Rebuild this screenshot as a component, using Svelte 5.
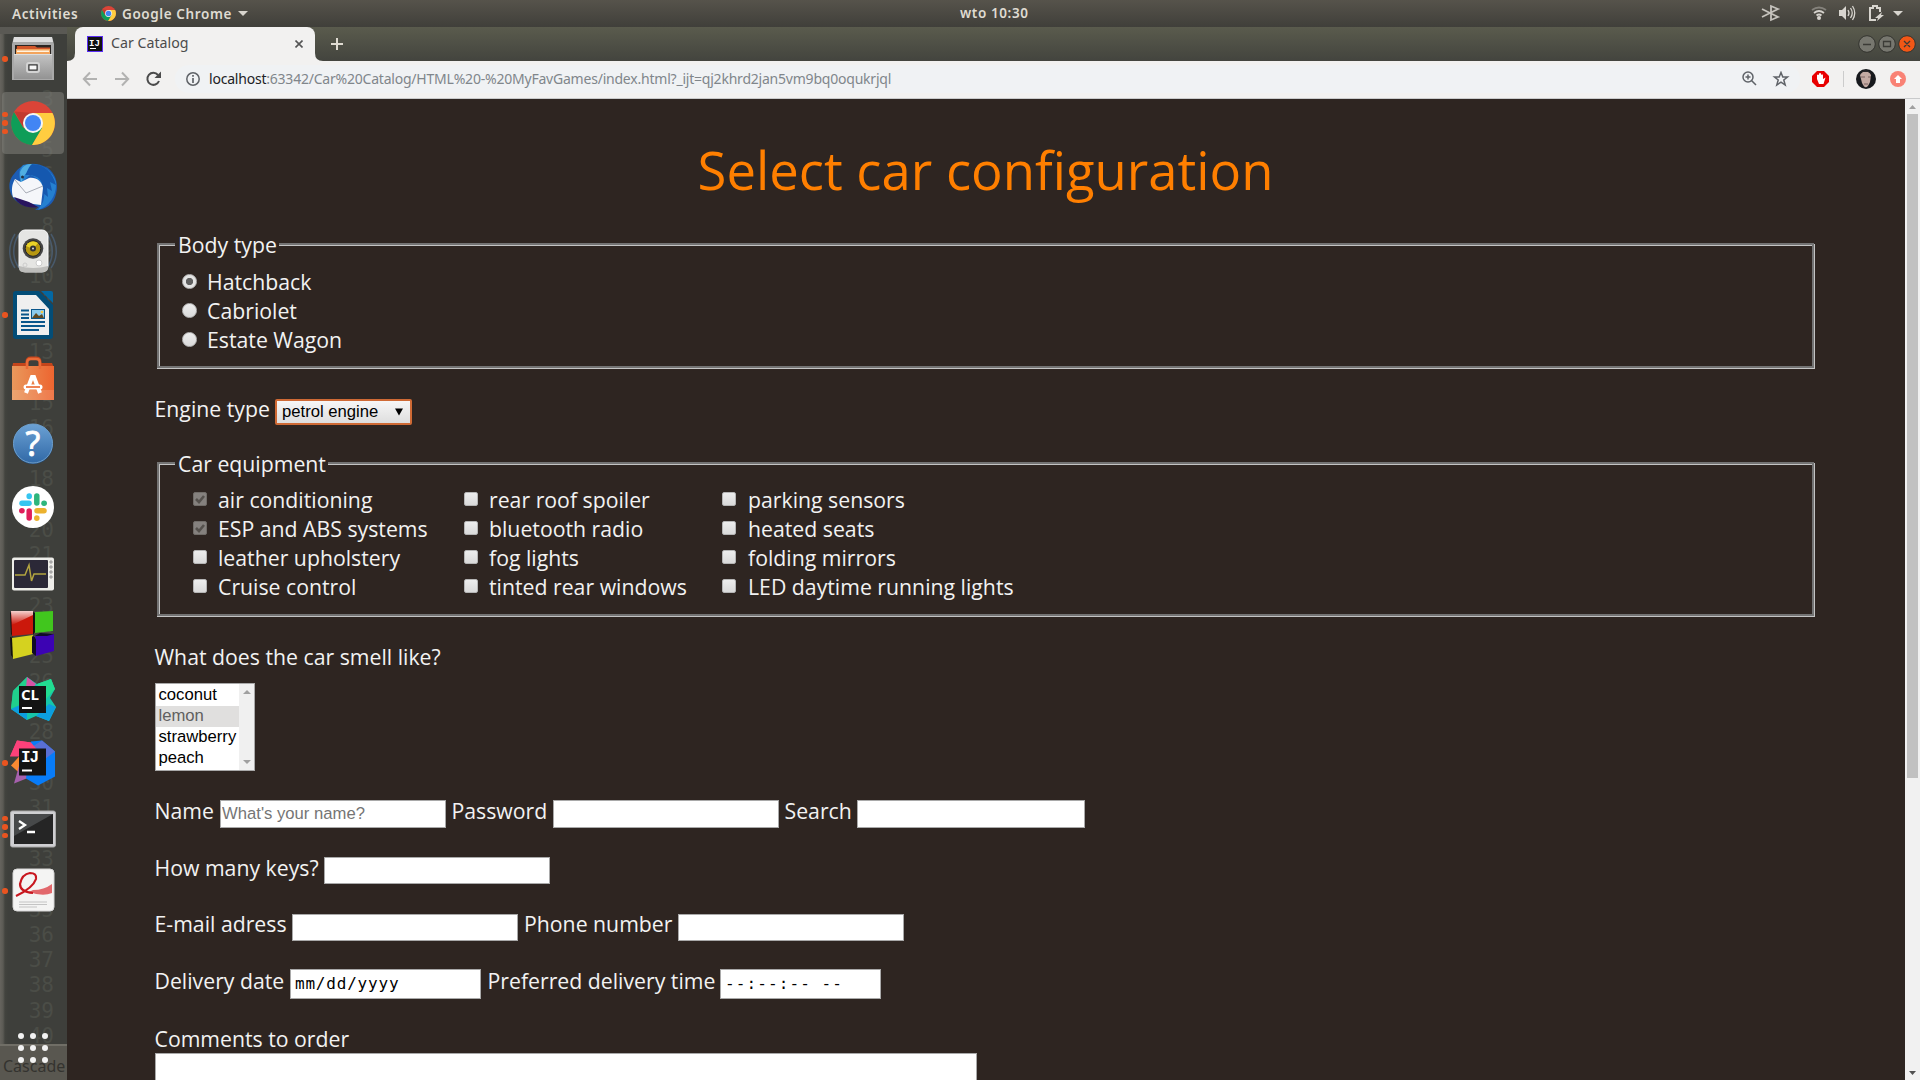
<script>
  // Line numbers of the editor that shows faintly through the dock.
  const covered = [4, 14, 17, 19, 27, 29];
  const lineNumbers = Array.from({ length: 38 }, (_, i) => (covered.includes(i + 3) ? '' : i + 3));
  const dock = [
    { id: 'files', dots: 1 },
    { id: 'chrome', dots: 3 },
    { id: 'mail', dots: 0 },
    { id: 'music', dots: 0 },
    { id: 'writer', dots: 1 },
    { id: 'software', dots: 0 },
    { id: 'help', dots: 0 },
    { id: 'slack', dots: 0 },
    { id: 'monitor', dots: 0 },
    { id: 'blocks', dots: 0 },
    { id: 'clion', dots: 0 },
    { id: 'idea', dots: 1 },
    { id: 'terminal', dots: 3 },
    { id: 'reader', dots: 1 }
  ];
  // Optical vertical adjustment of single icons inside their 48px box.
  const shift = { idea: 1.5, terminal: -1, reader: 1, help: -0.5 };
  const bodies = ['Hatchback', 'Cabriolet', 'Estate Wagon'];
  const equipment = [
    ['air conditioning', 'ESP and ABS systems', 'leather upholstery', 'Cruise control'],
    ['rear roof spoiler', 'bluetooth radio', 'fog lights', 'tinted rear windows'],
    ['parking sensors', 'heated seats', 'folding mirrors', 'LED daytime running lights']
  ];
  const smells = ['coconut', 'lemon', 'strawberry', 'peach'];
</script>

{#snippet chromeLogo(size)}
  <svg width={size} height={size} viewBox="0 0 44 44">
    <circle cx="22" cy="22" r="22" fill="#db4437" />
    <path d="M3 11 A22 22 0 0 0 21 44 L31.5 27 L22 22 L12.5 27Z" fill="#0f9d58" />
    <path d="M22 12 H41.5 A22 22 0 0 1 21 44 L31 27Z" fill="#ffcd40" />
    <path d="M3.5 10.500L13 27 L12 22 22 12Z" fill="#b5362c" opacity=".65" />
    <circle cx="22" cy="22" r="10" fill="#f5f5f5" />
    <circle cx="22" cy="22" r="8" fill="#4285f4" />
  </svg>
{/snippet}

{#snippet dockIcon(id)}
  {#if id === 'chrome'}
    {@render chromeLogo(44)}
  {:else}
    <svg width="48" height="48" viewBox="0 {shift[id] ?? 0} 48 48">
      {#if id === 'files'}
        <path d="M5 2H43L45 9V45H3V9Z" fill="#a9a9a9" />
        <path d="M5 2H43L44 7H4Z" fill="#dedede" />
        <path d="M6 10H42V20H6Z" fill="#2b2522" />
        <path d="M8 11H26L28 12.500H41V20H7Z" fill="#d2572a" />
        <path d="M7 14H41V20H7Z" fill="#f3a45c" />
        <path d="M8 15.500H40V17H8Z" fill="#fff3df" />
        <path d="M5 19H43V44H5Z" fill="url(#steel)" />
        <path d="M5 19.500H43" stroke="#ddd" />
        <rect x="18" y="28" width="12" height="9" rx="2" fill="#8b8b8b" stroke="#d3d3d3" stroke-width="2" />
        <rect x="20" y="30" width="8" height="5" fill="#f7f7f7" stroke="#333" />
      {:else if id === 'mail'}
        <path d="M5 11C12 0 25-2 37 4C46 9 50 20 47 31C45 41 37 47 26 47L30 44C15 46 3 38 1 28C-1 21 2 14 5 11Z" fill="#1c5cb4" />
        <path d="M14 2C28-2 43 5 47 19C48 32 41 43 29 47L34 39C38 26 33 16 21 12L12 20C9 11 10 6 14 2Z" fill="#2580d0" />
        <path d="M22 1C36 1 44 10 47 22L41 19L43 28L38 25L39 34L34 30C35 17 29 11 16 12Z" fill="#1558af" />
        <path d="M11 9C14 2 18 1 23 1C18 5 19 9 15 13L12 20Z" fill="#50aee1" />
        <circle cx="13.500" cy="14" r="1.500" fill="#263142" />
        <path d="M6 16L12 19 20 15C27 14 33 18 34 25L32 42C22 41 11 38 4 34C2 27 3 21 6 16Z" fill="#f5f6fa" />
        <path d="M6 17L17 30L34 23" fill="none" stroke="#a9adb7" />
        <path d="M5 34L20 39L29 44C19 46 9 42 5 34Z" fill="#29145e" />
      {:else if id === 'music'}
        <path d="M6 7C-1 18-1 31 6 41M10 7C3 18 3 31 10 41M42 7C49 18 49 31 42 41M38 7C45 18 45 31 38 41" fill="none" stroke="#4d6580" stroke-opacity=".7" stroke-width="1.500" />
        <rect x="10" y="3" width="29" height="42" rx="6" fill="#e5e5e3" stroke="#fafafa" />
        <path d="M10 39Q24 43 39 39V42Q38 45 34 45H14Q10 45 10 41Z" fill="#bdbdbb" />
        <circle cx="24" cy="21.500" r="10.300" fill="#454545" />
        <circle cx="24" cy="21.500" r="7.800" fill="#b69711" stroke="#262626" />
        <path d="M17 19A8 8 0 0 1 29 16L24 22Z" fill="#ead328" />
        <circle cx="24" cy="21.500" r="3" fill="#333" />
        <circle cx="24" cy="21.500" r="1" fill="#ddd" />
        <circle cx="30" cy="36" r="3" fill="#fff" stroke="#ccc" />
        <circle cx="16" cy="38" r="2" fill="none" stroke="#ccc" />
      {:else if id === 'writer'}
        <path d="M7 0H30L44 14V45Q44 48 41 48H7Q4 48 4 45V3Q4 0 7 0Z" fill="#034d77" />
        <path d="M32 0H42Q44 0 44 2V12Z" fill="#0368a3" />
        <path d="M8 4H27L40 18V44H8Z" fill="#efefef" />
        <path d="M12 19.500H20M12 23.500H20M12 27H20M12 31H36M12 35H36M12 39H30" stroke="#0a568b" stroke-width="2" />
        <rect x="22.500" y="18.500" width="13" height="9" fill="#8ccbee" stroke="#0a568b" />
        <path d="M23 27L27 22 30 25 33 23 35 27Z" fill="#604922" /><circle cx="33" cy="21" r="1.300" fill="#f7c843" />
      {:else if id === 'software'}
        <path d="M18 14V7Q18 3 22 3H27Q31 3 31 7V14" fill="none" stroke="#c9471c" stroke-width="3" />
        <path d="M4 8H18V12H31V8H43L45 13H3Z" fill="#c4451b" />
        <path d="M3 11H45V45H3Z" fill="url(#bag)" />
        <path d="M3 35H45V45H3Z" fill="#fff" opacity=".13" />
        <path d="M18 14V8Q18 4 22 4H27Q31 4 31 8V14" fill="none" stroke="#ea6b38" stroke-width="2.500" />
        <path d="M17 38L23 22H25L31 38" fill="none" stroke="#fff" stroke-width="4" />
        <rect x="14.500" y="29.500" width="19" height="5" rx="2.500" fill="#fff" />
        <path d="M17 32H31" stroke="#ed6d37" stroke-width="1.700" />
      {:else if id === 'help'}
        <circle cx="24" cy="24.500" r="20" fill="#234f80" />
        <circle cx="24" cy="24" r="19.500" fill="url(#helpfill)" stroke="#6f9fca" />
        <text x="24" y="36" text-anchor="middle" class="question">?</text>
      {:else if id === 'slack'}
        <circle cx="24" cy="24" r="21" fill="#fff" />
        <g stroke-width="5.500" stroke-linecap="round">
          <path d="M13 20.200H20" stroke="#36c5f0" /><path d="M20.200 13V13.500" stroke="#36c5f0" />
          <path d="M27.800 13V20" stroke="#2eb67d" /><path d="M35 20.200H35.200" stroke="#2eb67d" />
          <path d="M28 27.800H35" stroke="#ecb22e" /><path d="M27.800 35V35.200" stroke="#ecb22e" />
          <path d="M20.200 28V35" stroke="#e01e5a" /><path d="M12.800 27.800H13" stroke="#e01e5a" />
        </g>
      {:else if id === 'monitor'}
        <rect x="3" y="10.500" width="42" height="33" rx="2" fill="#edede9" />
        <rect x="5" y="13" width="34" height="28" rx="1" fill="#2b2837" />
        <path d="M6 28H16L18 23L20 18L22.500 34L25 27H37" fill="none" stroke="#b3a440" stroke-width="1.500" />
        <g fill="#bbb" stroke="#888" stroke-width=".6"><circle cx="42" cy="15" r="1.300" /><circle cx="42" cy="20" r="1.300" /><circle cx="42" cy="25" r="1.300" /><circle cx="42" cy="30" r="1.300" /></g>
      {:else if id === 'blocks'}
        <path d="M1 1L4 4V26L2 23ZM24 1L26 2V21L24 24ZM1 26L4 27V47L2 44ZM24 25L27 27V44L24 41Z" fill="#111" />
        <path d="M2 0H24V23L3 25Z" fill="#cb180b" /><path d="M2 0H24V4L3 14Z" fill="url(#shine)" />
        <path d="M26 1L44 0V20L26 22Z" fill="#41c61e" />
        <path d="M3 27L24 24V43L4 48Z" fill="#d5d21f" />
        <path d="M26 25L45 23V40L27 45Z" fill="#3c03b3" />
        <path d="M26 25L31 22L45 23L38 25ZM23 25L27 28V45L23 42Z" fill="#100b28" />
      {:else if id === 'clion' || id === 'idea'}
        {#if id === 'clion'}
          <path d="M4 16L18 2L28 9L42 4L46 14L41 23L47 32L40 46L27 41L18 45L2 34Z" fill="#16c6aa" />
          <path d="M4 16L18 2L16 28L2 34Z" fill="#20d08c" /><path d="M18 2L27 9L22 15L17 13Z" fill="#d653a5" />
          <path d="M28 9L42 4L46 14L36 25Z" fill="#22dc91" /><path d="M2 34L18 27V45ZM27 41L40 29L47 32L40 46Z" fill="#0c9ee0" />
        {:else}
          <path d="M8 3L22 5L17 19L1 19Z" fill="#fc417a" /><path d="M2 28L11 18V36Z" fill="#f98932" />
          <path d="M5 46L11 25L25 38Z" fill="#a560ad" /><path d="M22 4L33 3L46 14V39L29 48L17 41Z" fill="#087cf8" />
          <path d="M33 3L46 14L34 23L22 10Z" fill="#596fd4" />
          <path d="M8 3L22 5L28 12H10L1 19Z" fill="#fc417a" />
        {/if}
        <rect x="10" y="11" width="27" height="27" fill="#141414" />
        <text x="12" y="24.500" class="ide" class:mono={id === 'idea'}>{id === 'clion' ? 'CL' : 'IJ'}</text>
        <path d="M13 33H23" stroke="#fff" stroke-width="2" />
      {:else if id === 'terminal'}
        <rect x="1.500" y="7" width="45" height="36" rx="2" fill="#cfcfd2" stroke="#aaa" />
        <path d="M5 10H44V40H5Z" fill="#252525" /><path d="M5 10H44L5 32Z" fill="#55595a" opacity=".7" />
        <path d="M10 17L16 21L10 25M18 28H26" fill="none" stroke="#fff" stroke-width="2.300" />
      {:else if id === 'reader'}
        <rect x="4" y="3" width="41" height="42" rx="4" fill="#f4f4f3" stroke="#d7d7d7" />
        <path d="M10 36H38M10 38.500H38M10 41H28" stroke="#c4c4c4" />
        <path d="M24 24Q35 24 43 18V27Q34 31 20 26Z" fill="#e2686c" />
        <path d="M7 30Q24 22 27 13Q28 7 21 7Q13 8 11 18Q11 26 24 27" fill="none" stroke="#c8171f" stroke-width="2.200" />
      {/if}
    </svg>
  {/if}
{/snippet}

<svg class="defs" width="0" height="0">
  <defs>
    <linearGradient id="steel" x2="0" y2="1"><stop stop-color="#c4c4c4" /><stop offset="1" stop-color="#939393" /></linearGradient>
    <linearGradient id="bag"><stop stop-color="#e9985c" /><stop offset="1" stop-color="#ed6530" /></linearGradient>
    <linearGradient id="helpfill" x2="0" y2="1"><stop stop-color="#6ba1d4" /><stop offset="1" stop-color="#3169a7" /></linearGradient>
    <linearGradient id="shine" x2="0" y2="1"><stop stop-color="#fff" stop-opacity=".8" /><stop offset="1" stop-color="#fff" stop-opacity="0" /></linearGradient>
  </defs>
</svg>

<div class="desktop">
  <header class="topbar">
    <span class="activities">Activities</span>
    <span class="app-logo">{@render chromeLogo(15)}</span>
    <span class="app-name">Google Chrome</span>
    <svg class="caret" width="10" height="6"><path d="M0 0H10L5 5Z" fill="#d8d5ce" /></svg>
    <span class="clock">wto 10:30</span>
    <svg class="tray" width="154" height="27" viewBox="0 0 154 27">
      <path d="M1 9L17 17L10 20V6L17 9L1 17" fill="none" stroke="#c6c3bd" stroke-width="1.800" />
      <g fill="none" stroke="#d5d2cc" stroke-width="1.800"><path d="M51 10Q58 5 65 10" opacity=".4" /><path d="M53 13Q58 9 63 13M55.500 15.500Q58 13.500 60.500 15.500" /></g>
      <circle cx="58" cy="18" r="2" fill="#d8d5cf" />
      <path d="M78 10H81L85 6V20L81 16H78Z" fill="#d8d5cf" />
      <path d="M87 10Q89 13 87 16M89.500 8Q93 13 89.500 18M91.500 6Q96 13 91.500 20" fill="none" stroke="#d8d5cf" stroke-width="1.300" />
      <path d="M119 12V8H116V6H112V8H109V20H115" fill="none" stroke="#d8d5cf" stroke-width="2" />
      <path d="M121 12L114 18H117L116 21L123 15H120Z" fill="#d8d5cf" />
      <path d="M132 11H142L137 16Z" fill="#d8d5cf" />
    </svg>
  </header>

  <div class="workspace">
    <aside class="dock">
      <div class="dock-cap"></div>
      <div class="ghost">
        {#each lineNumbers as n}<span>{n}</span>{/each}
      </div>
      <div class="ghost-status">Cascade</div>
      <div class="launchers">
        {#each dock as item}
          <div class="launcher" class:active={item.id === 'chrome'}>
            <div class="dots">{#each Array(item.dots) as _}<i></i>{/each}</div>
            <div class="icon">{@render dockIcon(item.id)}</div>
          </div>
        {/each}
      </div>
      <div class="apps">{#each Array(9) as _}<i></i>{/each}</div>
    </aside>

    <main class="browser">
      <div class="tabs">
        <div class="tab">
          <svg class="favicon" width="16" height="16"><rect width="16" height="16" fill="#5a2df5" /><rect x="1" y="1" width="14" height="14" fill="#111" /><text x="2" y="9.500" class="fav">IJ</text><path d="M3 12.500H9" stroke="#fff" /></svg>
          <span class="tab-title">Car Catalog</span>
          <svg class="tab-close" width="8" height="8"><path d="M.5 .5L7.500 7.500M7.500 .5L.5 7.500" stroke="#555" stroke-width="1.600" /></svg>
          <svg class="flare left" width="8" height="8"><path d="M8 0V8H0Q8 8 8 0Z" fill="#f2f1f0" /></svg>
          <svg class="flare right" width="8" height="8"><path d="M0 0V8H8Q0 8 0 0Z" fill="#f2f1f0" /></svg>
        </div>
        <svg class="plus" width="12" height="12"><path d="M6 0V12M0 6H12" stroke="#dfdbd2" stroke-width="2" /></svg>
        <svg class="window-buttons" width="62" height="20">
          <g stroke="#34342f"><circle cx="10" cy="10" r="8.300" fill="#77776f" /><circle cx="30" cy="10" r="8.300" fill="#77776f" /><circle cx="50" cy="10" r="8.300" fill="#f25716" /></g>
          <path d="M6 10.500H14M26.500 7.500H33.500V12.500H26.500ZM47 7L53 13M53 7L47 13" fill="none" stroke="#3b3b36" stroke-width="1.300" />
        </svg>
      </div>
      <div class="toolbar">
        <svg class="nav" width="84" height="36" viewBox="0 0 84 36">
          <g fill="none" stroke-width="2"><path d="M15 18H2M8 11.500L1.800 18L8 24.500M33 18H46M40 11.500L46.200 18L40 24.500" stroke="#b2b2b1" /><path d="M76 14A6 6 0 1 0 77 20" stroke="#4b4b4b" /></g>
          <path d="M79 10.500V17H72.500Z" fill="#4b4b4b" />
        </svg>
        <div class="address">
          <svg class="info" width="14" height="14"><circle cx="7" cy="7" r="6.200" fill="none" stroke="#5f6368" stroke-width="1.500" /><path d="M7 6V11M7 3V4.700" stroke="#5f6368" stroke-width="1.700" /></svg>
          <span class="url"><b>localhost</b>:63342/Car%20Catalog/HTML%20-%20MyFavGames/index.html?_ijt=qj2khrd2jan5vm9bq0oqukrjql</span>
          <svg class="page-actions" width="48" height="16"><g fill="none" stroke="#5f6368" stroke-width="1.500"><circle cx="6" cy="6" r="5" /><path d="M9.500 9.500L14 14M3.500 6H8.500M6 3.500V8.500" /><path d="M39 1.500L40.800 6H45.500L41.800 9L43.200 14L39 11.200L34.800 14L36.200 9L32.500 6H37.200Z" /></g></svg>
        </div>
        <svg class="extensions" width="106" height="24" viewBox="0 0 106 24">
          <path d="M5 4H12L17 9V15L12 20H5L0 15V9Z" transform="translate(4)" fill="#e80000" />
          <path d="M9 12V8Q10 7 11 8V6.500Q12 5.500 13 6.500V8Q14.500 6.500 15 8.500V12L17.500 10.500L15.500 17H11Z" fill="#fff" />
          <path d="M35.500 4V20" stroke="#ccc" />
          <circle cx="58" cy="12" r="10" fill="#17191d" />
          <path d="M52 8Q58 0 63 8L62 15Q58 25 54 16Z" fill="#c4aaa3" />
          <path d="M53 10H57M60 10H63M56 17H60" stroke="#5c4444" stroke-opacity=".7" />
          <path d="M53 5Q58 0 64 7L60 5Z" fill="#29272a" />
          <circle cx="90" cy="12" r="8" fill="#f98275" />
          <path d="M90 8L94 12H92V16H88V12H86Z" fill="#fff" />
        </svg>
      </div>

      <div class="viewport">
        <div class="page">
          <h1>Select car configuration</h1>
          <fieldset class="body-type">
            <legend>Body type</legend>
            {#each bodies as body, i}
              <label class="choice"><span class="radio" class:picked={i === 0}></span>{body}</label>
            {/each}
          </fieldset>

          <div class="row engine">
            <label for="engine">Engine type</label>
            <div class="combo" id="engine"><span>petrol engine</span><svg width="8" height="8"><path d="M0 .5H8L4 7.500Z" /></svg></div>
          </div>

          <fieldset class="equipment">
            <legend>Car equipment</legend>
            <div class="columns">
              {#each equipment as column, c}
                <div class="column">
                  {#each column as item, i}
                    <label class="choice">
                      <span class="check" class:locked={c === 0 && i < 2}>
                        {#if c === 0 && i < 2}<svg width="12" height="12"><path d="M2 6L5 9L10 3" fill="none" stroke="#55514d" stroke-width="2.600" /></svg>{/if}
                      </span>{item}
                    </label>
                  {/each}
                </div>
              {/each}
            </div>
          </fieldset>

          <div class="smell">What does the car smell like?</div>
          <div class="listbox">
            <div class="options">
              {#each smells as smell}<span class:chosen={smell === 'lemon'}>{smell}</span>{/each}
            </div>
            <div class="list-scroll">
              <svg width="8" height="4"><path d="M0 4L4 0L8 4Z" fill="#a0a0a0" /></svg>
              <svg width="8" height="4"><path d="M0 0L4 4L8 0Z" fill="#a0a0a0" /></svg>
            </div>
          </div>

          <div class="row identity">
            <label for="name">Name</label><input id="name" placeholder="What's your name?" />
            <label for="pass">Password</label><input id="pass" type="password" />
            <label for="search">Search</label><input id="search" />
          </div>
          <div class="row keys"><label for="keys">How many keys?</label><input id="keys" /></div>
          <div class="row contact">
            <label for="mail">E-mail adress</label><input id="mail" />
            <label for="phone">Phone number</label><input id="phone" />
          </div>
          <div class="row delivery">
            <label for="date">Delivery date</label><div class="field date" id="date">mm/dd/yyyy</div>
            <label for="time">Preferred delivery time</label><div class="field time" id="time">--:--:-- --</div>
          </div>
          <div class="comments-label">Comments to order</div>
          <textarea></textarea>
        </div>
        <div class="scrollbar">
          <svg width="15" height="15"><path d="M4 10L7.500 6L11 10Z" fill="#a0a0a0" /></svg>
          <div class="thumb"></div>
          <svg width="15" height="15"><path d="M4 6L7.500 10L11 6Z" fill="#505050" /></svg>
        </div>
      </div>
    </main>
  </div>
</div>

<style>
  :global(body) { margin: 0; overflow: hidden; background: #2e2521; }
  * { box-sizing: border-box; }
  svg { display: block; flex: none; }
  .defs { position: absolute; }
  .desktop { width: 1920px; height: 1080px; display: flex; flex-direction: column; overflow: hidden; font-family: 'Open Sans', sans-serif; }

  .topbar { position: relative; height: 27px; flex: none; display: flex; align-items: center; padding: 0 5px 0 12px; background: linear-gradient(#56534b, #403f3a); color: #dfdbd2; font: 600 13.500px/26px 'Noto Sans', sans-serif; letter-spacing: .6px; white-space: nowrap; }
  .activities { width: 89px; }
  .app-logo { width: 21px; }
  .app-name { width: 116px; }
  .clock { position: absolute; left: 960px; top: 0; }
  .tray { margin-left: auto; }

  .workspace { flex: 1; display: flex; min-height: 0; }
  .dock { position: relative; width: 67px; flex: none; background: linear-gradient(90deg, #66645e 0, #5b5a54 3px, #42433e 5px, #3e3f3b 8px); overflow: hidden; }
  .dock-cap { position: absolute; left: 0; top: 0; width: 67px; height: 7px; background: #5a5954; }
  .ghost { position: absolute; left: 20px; top: 60px; width: 34px; display: flex; flex-direction: column; text-align: right; font: 21px/25.330px 'DejaVu Sans Mono', monospace; color: #4b4d47; }
  .ghost span { height: 25.330px; }
  .ghost-status { position: absolute; left: 0; top: 1017px; width: 67px; height: 36px; padding-left: 3px; border-top: 2px solid #706e66; background: #595750; color: #34332f; font: 16px/40px 'Noto Sans', sans-serif; }
  .launchers { position: relative; display: flex; flex-direction: column; }
  .launcher { display: flex; align-items: center; width: 62px; height: 62px; margin: 1px 0 1px 2px; border-radius: 4px; }
  .launcher.active { background: rgba(128, 128, 122, .55); }
  .dots { width: 5px; display: flex; flex-direction: column; gap: 3px; }
  .dots i { width: 5.500px; height: 5.500px; border-radius: 50%; background: #e95420; }
  .icon { width: 52px; display: flex; justify-content: center; }
  .apps { position: absolute; left: 18px; top: 1006px; display: grid; grid-template-columns: repeat(3, 6px); gap: 6px; }
  .apps i { width: 6px; height: 6px; border-radius: 50%; background: #f2f2f2; }
  .question { font: 34px 'Noto Sans', sans-serif; fill: #fff; stroke: #fff; stroke-width: .8px; }
  .ide { font: 700 15px 'Open Sans', sans-serif; fill: #fff; }
  .ide.mono { font: 700 16px 'Liberation Mono', monospace; letter-spacing: -1px; }
  .fav { font: 700 9px 'Liberation Mono', monospace; fill: #fff; }

  .browser { flex: 1; display: flex; flex-direction: column; min-width: 0; }
  .tabs { height: 34px; flex: none; display: flex; align-items: center; padding: 0 1px 0 8px; background: linear-gradient(#5a5b4d, #43443e); }
  .tab { position: relative; display: flex; align-items: center; width: 240px; height: 34px; padding: 0 12px; border-radius: 8px 8px 0 0; background: #f2f1f0; }
  .flare { position: absolute; bottom: 0; }
  .flare.left { left: -8px; }
  .flare.right { right: -8px; }
  .tab-title { margin: 0 0 2px 8px; color: #4c4c4c; font: 14.200px/30px 'Noto Sans', sans-serif; }
  .tab-close { margin-left: auto; }
  .plus { margin-left: 16px; }
  .window-buttons { margin-left: auto; }
  .toolbar { height: 38px; flex: none; display: flex; align-items: center; padding: 0 0 1px 15px; border-bottom: 1px solid #c9cacb; background: #f2f1f0; }
  .address { width: 1625px; height: 28px; margin-left: 9px; display: flex; align-items: center; padding: 0 10px 0 11px; border-radius: 14px; background: #f0f2f4; }
  .url { margin: 0 0 1px 9px; color: #80868b; white-space: nowrap; font: 14px/26px 'Noto Sans', sans-serif; letter-spacing: -.215px; }
  .url b { color: #202124; font-weight: 400; }
  .page-actions { margin-left: auto; }
  .extensions { margin-left: 8px; }

  .viewport { flex: 1; display: flex; min-height: 0; }
  .page { width: 1838px; padding: 0 88px 0 87px; background: #2e2521; color: #f2f2f2; font-size: 21.250px; line-height: 29px; overflow: hidden; }
  h1 { height: 144px; margin: 0; padding-top: 35px; color: #ff7f00; text-align: center; font-size: 52.600px; line-height: 72px; font-weight: 400; }
  fieldset { position: relative; margin: 0 3px; min-width: 0; border: 2px solid #737373; box-shadow: inset 1px 1px #c3c3c3, 0 1px #c3c3c3, 1px 1px #c3c3c3; }
  legend { position: absolute; left: 16px; top: -15px; padding: 0 2px 0 3px; line-height: 29px; background: #2e2521; }
  .choice { display: flex; height: 29px; white-space: nowrap; }
  .body-type { height: 125px; padding: 22px 0 0 23px; }
  .radio { width: 15px; height: 15px; margin: 7px 10px 0 0; border-radius: 50%; border: 1px solid #b9b9b9; background: linear-gradient(#ededed, #dadada); flex: none; }
  .radio.picked { background: radial-gradient(circle, #606060 3.300px, #e4e4e4 4px); }
  .row { display: flex; align-items: flex-start; white-space: nowrap; }
  .row label { flex: none; padding-left: .5px; }
  .engine { margin-top: 26px; height: 68px; }
  .engine label { width: 121px; }
  .combo { width: 137px; height: 26px; margin-top: 5px; display: flex; justify-content: space-between; align-items: center; padding: 0 7px 0 5px; border: 2px solid #cf6a35; border-radius: 2px; background: linear-gradient(#f6f6f6, #dedede); color: #000; font: 16.670px/22px 'Liberation Sans', sans-serif; }
  .equipment { height: 154px; padding: 21px 0 0 34px; }
  .columns { display: flex; }
  .column:nth-child(1) { width: 271px; }
  .column:nth-child(2) { width: 258px; }
  .column:nth-child(3) .check { margin-right: 12px; }
  .check { width: 14px; height: 14px; margin: 7px 11px 0 0; flex: none; border: 1px solid #b5b5b5; border-radius: 2px; background: linear-gradient(#ededed, #dadada); }
  .check.locked { border-color: #706c68; background: #85817e; }
  .smell { margin-top: 26px; height: 41px; padding-left: .5px; }
  .listbox { display: flex; width: 100px; height: 88px; margin-left: 1px; border: 1px solid #a9a9a9; background: #fff; color: #000; font: 16.670px/21px 'Liberation Sans', sans-serif; }
  .options { width: 83px; display: flex; flex-direction: column; padding-top: 1px; }
  .options span { height: 21px; padding-left: 2.500px; line-height: 20px; }
  .options .chosen { background: #e0dfde; color: #606060; }
  .list-scroll { width: 15px; display: flex; flex-direction: column; justify-content: space-between; align-items: center; padding: 6px 0; background: #f0f0f0; }
  input { width: 226px; height: 28px; margin: 4px 5px 0 0; padding: 1px; border: 1px solid #a9a9a9; border-radius: 0; background: #fff; font: 16.670px 'Liberation Sans', sans-serif; outline: 0; }
  input::placeholder { color: #757575; opacity: 1; }
  .identity { margin-top: 25px; height: 57px; }
  .identity label:nth-of-type(1) { width: 66px; }
  .identity label:nth-of-type(2) { width: 102px; }
  .identity label:nth-of-type(3) { width: 73px; }
  #search { width: 228px; }
  .keys { height: 57px; }
  .keys label { width: 170px; }
  .keys input, .contact input { height: 27px; }
  .contact { height: 56px; }
  .contact label { line-height: 27px; }
  .contact label:nth-of-type(1) { width: 138px; }
  .contact label:nth-of-type(2) { width: 155px; padding-left: 1px; }
  .delivery { height: 58px; }
  .delivery label:nth-of-type(1) { width: 136px; }
  .delivery label:nth-of-type(2) { width: 233px; }
  .field { height: 30px; margin-top: 3px; padding-left: 4px; border: 1px solid #a9a9a9; background: #fff; color: #000; font: 16px/27px 'DejaVu Sans Mono', monospace; letter-spacing: .8px; white-space: pre; }
  .date { width: 191px; margin-right: 6px; }
  .time { width: 161px; letter-spacing: 1.100px; }
  .comments-label { height: 29px; padding-left: .5px; }
  textarea { display: block; width: 822px; height: 80px; margin-left: 1px; border: 1px solid #a9a9a9; border-radius: 0; background: #fff; resize: none; }
  .scrollbar { width: 15px; display: flex; flex-direction: column; background: #f1f1f1; }
  .thumb { width: 11px; height: 664px; margin: 0 2px auto; background: #c1c1c1; }
</style>
